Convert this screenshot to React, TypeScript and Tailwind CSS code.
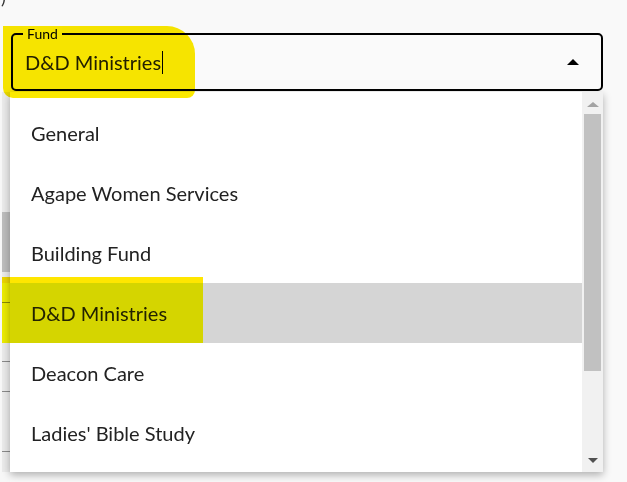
const items = [
  "General",
  "Agape Women Services",
  "Building Fund",
  "D&D Ministries",
  "Deacon Care",
  "Ladies' Bible Study",
];

const selected = "D&D Ministries";

export default function App() {
  return (
    <div
      className="relative w-[627px] h-[482px] overflow-hidden bg-[#f9f9f9] text-[#222]"
      style={{ fontFamily: "Lato, 'Open Sans', sans-serif" }}
    >
      {/* leftover glyph from the form above */}
      <div className="h-[33px] pl-[1px] -mt-[13px] text-[18px] leading-[20px] text-[#333]">)</div>

      {/* select input */}
      <div className="relative ml-[11px] w-[592px] h-[58px] mt-[13px] border-2 border-black rounded-[5px] bg-[#fafafa] flex items-center pl-[12px] pr-[22px]">
        <span className="absolute -top-[9px] left-[10px] px-[4px] bg-[#fafafa] text-[14px] leading-[15px] text-black">
          Fund
        </span>
        <span className="text-[20px] leading-[24px] text-[#222]">{selected}</span>
        <span className="w-px h-[23px] bg-black ml-[1px]" />
        <div className="ml-auto w-0 h-0 border-l-[6px] border-r-[6px] border-b-[6px] border-l-transparent border-r-transparent border-b-black" />
      </div>

      <div className="flex mt-px">
        {/* page content behind the menu */}
        <div className="w-[10px] h-[390px] flex flex-col bg-[#f7f7f7]">
          <div className="ml-[2px] w-[8px] h-[380px] bg-[#ebebeb] flex flex-col">
            <div className="h-[120px]" />
            <div className="h-[60px] bg-[#bdbdbd]" />
            <div className="h-[30px]" />
            <div className="h-px bg-[#8a8a8a]" />
            <div className="h-[58px]" />
            <div className="h-px bg-[#8a8a8a]" />
            <div className="h-[29px]" />
            <div className="h-px bg-[#8a8a8a]" />
            <div className="h-[59px]" />
            <div className="h-px bg-[#8a8a8a]" />
          </div>
        </div>

        {/* dropdown menu */}
        <div className="w-[593px] h-[380px] flex bg-white shadow-[0_3px_8px_rgba(0,0,0,0.3)]">
          <div className="flex-1 pt-[11px] overflow-hidden">
            {items.map((item) => (
              <div
                key={item}
                className={`h-[60px] flex items-center pl-[21px] text-[20px] text-[#222] ${
                  item === selected ? "bg-[#d5d5d5]" : ""
                }`}
              >
                {item}
              </div>
            ))}
          </div>
          <div className="w-[21px] bg-[#f1f1f1] flex flex-col items-center">
            <div className="mt-[10px] w-0 h-0 border-l-[6px] border-r-[6px] border-b-[5px] border-l-transparent border-r-transparent border-b-[#a3a3a3]" />
            <div className="mt-[7px] w-[17px] h-[257px] bg-[#c1c1c1]" />
            <div className="mt-auto mb-[9px] w-0 h-0 border-l-[5px] border-r-[5px] border-t-[5px] border-l-transparent border-r-transparent border-t-[#505050]" />
          </div>
        </div>
      </div>

      {/* yellow marker annotations */}
      <div className="absolute left-[3px] top-[26px] w-[192px] h-[72px] bg-[#fbe900] mix-blend-multiply rounded-tr-[28px] rounded-bl-[10px] rounded-br-[8px]" />
      <div className="absolute left-[2px] top-[277px] w-[201px] h-[6px] bg-[#ffe600] mix-blend-multiply" />
      <div className="absolute left-[2px] top-[283px] w-[201px] h-[60px] bg-[#ffff00] mix-blend-multiply" />
    </div>
  );
}
